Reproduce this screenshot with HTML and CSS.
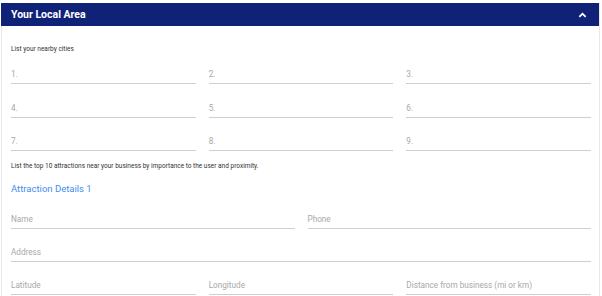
FILE: index.html
```html
<!DOCTYPE html>
<html lang="en">
<head>
    <meta charset="UTF-8">
    <meta name="viewport" content="width=device-width, initial-scale=1.0">
    <title>Your Local Area</title>
    <link rel="stylesheet" href="styles.css">
</head>
<body>
    <section class="panel">
        <div class="panel-header">
            <h2>Your Local Area</h2>
            <svg class="chevron" viewBox="0 0 10 6">
                <polyline points="1.5,5 5,1.5 8.5,5"/>
            </svg>
        </div>
        <div class="panel-body">
            <p class="hint">List your nearby cities</p>
            <div class="grid cols-3 cities">
                <div class="field">1.</div>
                <div class="field">2.</div>
                <div class="field">3.</div>
                <div class="field">4.</div>
                <div class="field">5.</div>
                <div class="field">6.</div>
                <div class="field">7.</div>
                <div class="field">8.</div>
                <div class="field">9.</div>
            </div>

            <p class="hint hint-top">List the top 10 attractions near your business by importance to the user and proximity.</p>
            <h3 class="subtitle">Attraction Details 1</h3>

            <div class="grid cols-2">
                <div class="field">Name</div>
                <div class="field">Phone</div>
                <div class="field wide">Address</div>
            </div>
            <div class="grid cols-3 row-gap">
                <div class="field">Latitude</div>
                <div class="field">Longitude</div>
                <div class="field">Distance from business (mi or km)</div>
            </div>
        </div>
    </section>
</body>
</html>
```

FILE: styles.css
```css
* {
    box-sizing: border-box;
    margin: 0;
    padding: 0;
}

body {
    font-family: Roboto, "Liberation Sans", Arial, sans-serif;
    background-color: #fff;
    color: #333;
    overflow: hidden;
}

/* Panel */
.panel {
    margin: 3px 2px 0 1px;
    border-right: 1px solid #e8e8e8;
    border-left: 1px solid #e8e8e8;
    height: 300px;
}

.panel-header {
    display: flex;
    justify-content: space-between;
    align-items: center;
    height: 23px;
    padding: 0 12px 0 10px;
    margin-left: -1px;
    background-color: #0f2278;
    color: #fff;
}

.panel-header h2 {
    font-size: 10.5px;
    font-weight: 700;
}

.chevron {
    width: 9px;
    height: 6px;
    fill: none;
    stroke: #fff;
    stroke-width: 2;
}

.panel-body {
    padding: 18px 8px 0 9px;
}

.hint {
    font-size: 6.5px;
    line-height: 10px;
    color: #333;
    margin-bottom: 15px;
}

.hint-top {
    margin-top: 10px;
    margin-bottom: 12px;
}

.subtitle {
    font-size: 9.5px;
    font-weight: 400;
    line-height: 12px;
    color: #3f8ef0;
    margin-bottom: 19px;
}

/* Campos */
.grid {
    display: grid;
    column-gap: 13px;
    row-gap: 18px;
}

.cities {
    row-gap: 18.5px;
}

.cols-3 {
    grid-template-columns: repeat(3, 1fr);
}

.cols-2 {
    grid-template-columns: repeat(2, 1fr);
}

.row-gap {
    margin-top: 18px;
}

.field {
    font-size: 8.2px;
    line-height: 10px;
    color: #a8a8a8;
    padding-bottom: 4px;
    border-bottom: 1px solid #cfcfcf;
}

.field.wide {
    grid-column: 1 / -1;
}
```
